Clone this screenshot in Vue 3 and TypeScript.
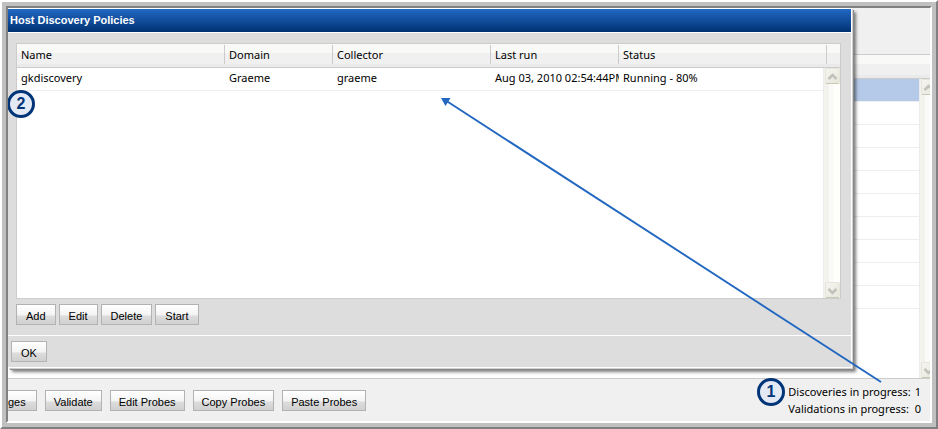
<script setup lang="ts">
interface Policy {
  name: string
  domain: string
  collector: string
  lastRun: string
  status: string
}

const policies: Policy[] = [
  {
    name: 'gkdiscovery',
    domain: 'Graeme',
    collector: 'graeme',
    lastRun: 'Aug 03, 2010 02:54:44PM',
    status: 'Running - 80%',
  },
]

const policyActions: string[] = ['Add', 'Edit', 'Delete', 'Start']
const probeActions: string[] = ['Validate', 'Edit Probes', 'Copy Probes', 'Paste Probes']
const discoveries = 1
const validations = 0
</script>

<template>
  <div class="bevel-outer">
    <div class="bevel-inner">
      <main class="desktop">
        <div class="top-bar"></div>
        <div class="host-head"></div>
        <div class="host-list">
          <div class="host-rows">
            <div v-for="n in 10" :key="n" class="host-row" :class="{ selected: n === 1 }"></div>
          </div>
          <div class="scroll scroll-clipped">
            <button type="button" class="scroll-btn" aria-label="Scroll hosts up">
              <svg viewBox="0 0 13 13"><path d="M2.500 9 6.500 5 10.500 9" /></svg>
            </button>
            <button type="button" class="scroll-btn" aria-label="Scroll hosts down">
              <svg viewBox="0 0 13 13"><path d="M2.500 5 6.500 9 10.500 5" /></svg>
            </button>
          </div>
        </div>
        <footer class="status-bar">
          <div class="probe-actions">
            <button type="button" class="btn btn-cut">ges</button>
            <button v-for="a in probeActions" :key="a" type="button" class="btn">{{ a }}</button>
          </div>
          <div class="progress">
            <span>Discoveries in progress:</span><span>{{ discoveries }}</span>
            <span>Validations in progress:</span><span>{{ validations }}</span>
          </div>
        </footer>

        <section class="dialog" role="dialog" aria-labelledby="dialog-title">
          <h1 id="dialog-title" class="dialog-title">Host Discovery Policies</h1>
          <div class="dialog-body">
            <div class="grid">
              <table class="policies">
                <colgroup>
                  <col class="c-name" />
                  <col class="c-domain" />
                  <col class="c-collector" />
                  <col class="c-run" />
                  <col />
                  <col class="c-end" />
                </colgroup>
                <thead>
                  <tr>
                    <th>Name</th>
                    <th>Domain</th>
                    <th>Collector</th>
                    <th>Last run</th>
                    <th>Status</th>
                    <td class="head-end"></td>
                  </tr>
                </thead>
                <tbody>
                  <tr v-for="p in policies" :key="p.name">
                    <td>{{ p.name }}</td>
                    <td>{{ p.domain }}</td>
                    <td>{{ p.collector }}</td>
                    <td>{{ p.lastRun }}</td>
                    <td>{{ p.status }}</td>
                    <td></td>
                  </tr>
                </tbody>
              </table>
              <div class="scroll">
                <button type="button" class="scroll-btn" aria-label="Scroll policies up">
                  <svg viewBox="0 0 13 13"><path d="M2.500 9 6.500 5 10.500 9" /></svg>
                </button>
                <button type="button" class="scroll-btn" aria-label="Scroll policies down">
                  <svg viewBox="0 0 13 13"><path d="M2.500 5 6.500 9 10.500 5" /></svg>
                </button>
              </div>
            </div>
            <div class="policy-actions">
              <button v-for="a in policyActions" :key="a" type="button" class="btn">{{ a }}</button>
            </div>
          </div>
          <div class="dialog-foot">
            <button type="button" class="btn">OK</button>
          </div>
        </section>

        <svg class="arrow" width="445" height="288" viewBox="0 0 445 288" aria-hidden="true">
          <path d="M4 4 440 286" fill="none" stroke="#2268c0" stroke-width="1.9" />
          <path d="M0 2H9.500L4.500 10Z" fill="#2268c0" />
        </svg>
        <span class="callout callout-one">1</span>
        <span class="callout callout-two">2</span>
      </main>
    </div>
  </div>
</template>

<style>
body {
  margin: 0;
}
</style>

<style scoped>
* {
  box-sizing: border-box;
}

.bevel-outer {
  min-height: 100vh;
  display: flex;
  background: #c0c0c0;
  border: 2px solid;
  border-color: #fff #808080 #808080 #fff;
  font-family: "Noto Sans", "Open Sans", sans-serif;
  font-size: 11px;
  color: #000;
}

.bevel-inner {
  flex: 1;
  display: flex;
  margin: 4px;
  border: 2px solid;
  border-color: #808080 #fff #fff #808080;
}

.desktop {
  position: relative;
  flex: 1;
  min-width: 0;
  display: flex;
  flex-direction: column;
  overflow: hidden;
  background: #fff;
}

.top-bar {
  height: 46px;
  background: #f0f0f0;
}

.host-head {
  height: 25px;
  border: solid #ccc;
  border-width: 1px 0;
  background: linear-gradient(#f9f9f7 9px, #f0f0f0 9px 20px, #eaeaea 20px);
}

.host-list {
  flex: 1;
  display: flex;
}

.host-rows {
  flex: 1;
}

.host-row {
  height: 23px;
  border-bottom: 1px solid #eee;
}

.host-row.selected {
  background: #b5c9e9;
}

.status-bar {
  display: flex;
  justify-content: space-between;
  align-items: flex-start;
  height: 43px;
  padding-right: 9px;
  border-top: 1px solid #ccc;
  background: #f0f0f0;
}

.probe-actions {
  display: flex;
  gap: 8px;
  padding-top: 11px;
}

.progress {
  display: grid;
  grid-template-columns: auto auto;
  column-gap: 4px;
  padding-top: 4px;
  line-height: 17px;
}

.btn {
  height: 21px;
  padding: 2px 9px 0;
  border: 1px solid #b2b2b2;
  border-radius: 0;
  background: linear-gradient(#fff, #f4f4f4 50%, #dcdcdc 60%, #d0d0d0);
  font: 11px/18px "Liberation Sans", Arial, sans-serif;
  color: #000;
  white-space: nowrap;
}

.probe-actions .btn {
  padding-inline: 8px;
}

.probe-actions .btn-cut {
  padding-inline: 0 10px;
  border-left: 0;
}

.scroll {
  display: flex;
  flex-direction: column;
  justify-content: space-between;
  width: 17px;
  padding-left: 1px;
  border-left: 1px solid #ececec;
  background: linear-gradient(90deg, #f3f3ee 0 5px, #fafaf8 5px 10px, #fefefb 10px);
}

.scroll-clipped {
  width: 11px;
  overflow: hidden;
}

.scroll-btn {
  flex: none;
  width: 15px;
  height: 16px;
  padding: 0;
  border: 1px solid #e6e6da;
  border-bottom-color: #c8c8b4;
  border-radius: 2px;
  background: linear-gradient(135deg, #f6f6f0, #e6e6dc);
}

.scroll-btn svg {
  display: block;
  width: 13px;
  height: 13px;
  fill: none;
  stroke: #c2c2bc;
  stroke-width: 2.6;
}

.dialog {
  position: absolute;
  top: 0;
  left: 0;
  right: 78px;
  border: solid #fff;
  border-width: 1px 1px 1px 0;
  background: #ddd;
  box-shadow: 1px 1px 0 #d0d0d0, 2px 2px 0 #888, 4px 4px 3px rgba(0, 0, 0, 0.5);
}

.dialog-title {
  height: 24px;
  margin: 0;
  padding-left: 2px;
  border-bottom: 1px solid #fff;
  background: linear-gradient(#2268c4, #003272);
  font: bold 11px/23px "Liberation Sans", Arial, sans-serif;
  color: #fff;
}

.dialog-body {
  padding: 10px 10px 10px 8px;
  border-bottom: 1px solid #fff;
}

.grid {
  display: grid;
  grid-template-columns: 1fr 17px;
  grid-template-rows: 24px 230px;
  border: 1px solid #ccc;
  background: #fff;
}

.grid .scroll {
  grid-area: 2 / 2;
}

.policies {
  grid-area: 1 / 1 / 3 / 3;
  align-self: start;
  width: 100%;
  table-layout: fixed;
  border-collapse: separate;
  border-spacing: 0;
}

.c-name {
  width: 208px;
}

.c-domain {
  width: 108px;
}

.c-collector {
  width: 158px;
}

.c-run {
  width: 128px;
}

.c-end {
  width: 13px;
}

.policies th,
.policies td {
  height: 23px;
  padding: 0 0 0 4px;
  border-bottom: 1px solid #eee;
  overflow: hidden;
  font-weight: normal;
  line-height: 20px;
  text-align: left;
  vertical-align: top;
  white-space: nowrap;
}

.policies th,
.policies .head-end {
  height: 24px;
  line-height: 22px;
  border-bottom-color: #ccc;
  background: linear-gradient(#f9f9f7 9px, #f0f0f0 9px 20px, #eaeaea 20px);
}

.policies th {
  background:
    linear-gradient(#ccc, #ccc) right 1px / 1px 19px no-repeat,
    linear-gradient(#f9f9f7 9px, #f0f0f0 9px 20px, #eaeaea 20px);
}

.policy-actions {
  display: flex;
  gap: 3px;
  padding-top: 5px;
}

.dialog-foot {
  padding: 5px 3px;
  display: flex;
}

.arrow {
  position: absolute;
  top: 88px;
  left: 433px;
  pointer-events: none;
}

.callout {
  position: absolute;
  width: 28px;
  height: 28px;
  border: 3px solid #003478;
  border-radius: 50%;
  background: #e4eaf4;
  font: bold 16px/22px "Liberation Sans", Arial, sans-serif;
  color: #003478;
  text-align: center;
}

.callout-one {
  right: 145px;
  bottom: 15px;
}

.callout-two {
  top: 82px;
  left: -1px;
}
</style>
